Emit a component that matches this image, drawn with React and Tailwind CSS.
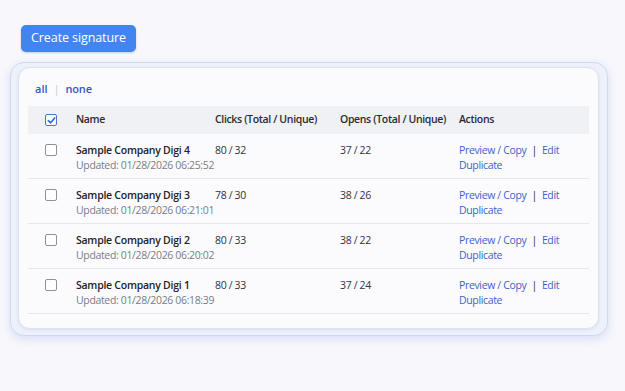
import React from "react";

const rows = [
  { name: "Sample Company Digi 4", updated: "Updated: 01/28/2026 06:25:52", clicks: "80 / 32", opens: "37 / 22" },
  { name: "Sample Company Digi 3", updated: "Updated: 01/28/2026 06:21:01", clicks: "78 / 30", opens: "38 / 26" },
  { name: "Sample Company Digi 2", updated: "Updated: 01/28/2026 06:20:02", clicks: "80 / 33", opens: "38 / 22" },
  { name: "Sample Company Digi 1", updated: "Updated: 01/28/2026 06:18:39", clicks: "80 / 33", opens: "37 / 24" },
];

const grid = "grid grid-cols-[48px_139px_125px_119px_1fr]";

export default function App() {
  return (
    <div
      className="w-[625px] h-[391px] bg-[#f7f7fc] overflow-hidden pt-[25px]"
      style={{ fontFamily: '"Open Sans", "Noto Sans", sans-serif' }}
    >
      <div className="pl-[21px]">
        <button className="h-[27px] w-[115px] rounded-[5px] bg-[#4285f0] text-white text-[12.5px] font-medium tracking-[-0.1px] flex items-center justify-center shadow-[0_1px_2px_rgba(40,80,180,0.25)]">
          Create signature
        </button>
      </div>
      <div className="ml-[10px] mt-[10px] w-[598px] h-[274px] rounded-[14px] border border-[#cfdaf2] bg-[#edf1fb] pl-[7px] pt-[4px] shadow-[0_3px_8px_rgba(120,150,220,0.25)]">
        <div className="w-[581px] h-[262px] rounded-[12px] border border-[#dfe3ee] bg-[#fbfbfe] px-[9px] pt-[13px] shadow-[0_1px_3px_rgba(100,120,180,0.15)]">
          <div className="pl-[7px] flex items-center text-[11px] font-semibold text-[#3558c4] h-[16px]">
            <span>all</span>
            <span className="mx-[6px] text-[#c8cad4] font-normal">|</span>
            <span className="tracking-[-0.2px]">none</span>
          </div>
          <div className="mt-[9px] whitespace-nowrap">
            <div className={`${grid} h-[28px] items-center bg-[#f0f1f5] text-[10.5px] font-semibold text-[#2b2b33] tracking-[-0.35px]`}>
              <div className="pl-[17px] flex items-center">
                <div className="w-[12px] h-[12px] rounded-[2px] border border-[#4a78d8] bg-white flex items-center justify-center">
                  <svg width="9" height="9" viewBox="0 0 10 10">
                    <path d="M1.5 5.2 L4 7.6 L8.6 2.2" fill="none" stroke="#2f68d8" strokeWidth="1.8" strokeLinecap="round" strokeLinejoin="round" />
                  </svg>
                </div>
              </div>
              <div>Name</div>
              <div>Clicks (Total / Unique)</div>
              <div>Opens (Total / Unique)</div>
              <div>Actions</div>
            </div>
            {rows.map((r) => (
              <div key={r.name} className={`${grid} h-[45px] pt-[9px] border-b border-[#e6e7ee] text-[10.5px] leading-[15px] text-[#33333a] tracking-[-0.35px]`}>
                <div className="pl-[17px] pt-[1px]">
                  <div className="w-[12px] h-[12px] rounded-[2px] border border-[#8f9099] bg-white" />
                </div>
                <div>
                  <div className="font-semibold text-[#222228] tracking-[-0.25px]">{r.name}</div>
                  <div className="text-[#7a7b85]">{r.updated}</div>
                </div>
                <div>{r.clicks}</div>
                <div>{r.opens}</div>
                <div className="text-[#3b62c8] font-medium">
                  <div className="flex items-center">
                    <span>Preview / Copy</span>
                    <span className="mx-[5px] text-[#2a2a30]">|</span>
                    <span>Edit</span>
                  </div>
                  <div>Duplicate</div>
                </div>
              </div>
            ))}
          </div>
        </div>
      </div>
    </div>
  );
}
